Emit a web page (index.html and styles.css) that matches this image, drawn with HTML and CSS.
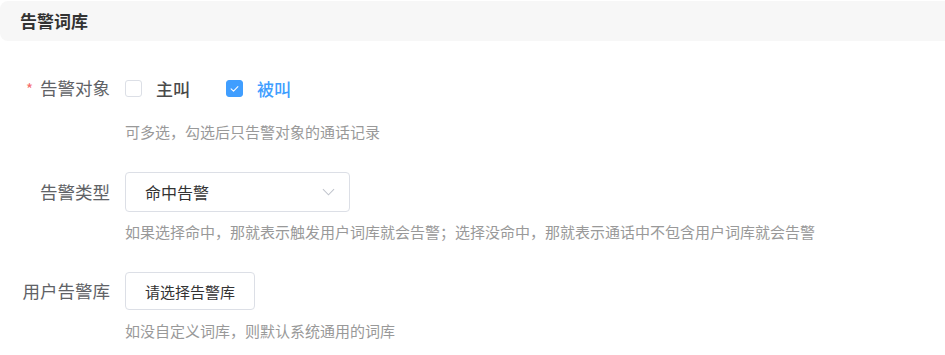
FILE: index.html
```html
<!DOCTYPE html>
<html lang="zh-CN">
<head>
  <meta charset="UTF-8">
  <meta name="viewport" content="width=device-width, initial-scale=1.0">
  <title>告警词库</title>
  <link rel="stylesheet" href="styles.css">
</head>
<body>

<div class="section-title">告警词库</div>

<form class="form">
  <div class="form-item item-first">
    <label class="form-label"><span class="required">*</span>告警对象</label>
    <div class="form-content">
      <div class="control">
        <label class="checkbox">
          <span class="box"></span>
          <span class="checkbox-text">主叫</span>
        </label>
        <label class="checkbox is-checked">
          <span class="box">
            <svg viewBox="0 0 16 16" width="13" height="13"><path d="M3.8 8.4 L6.8 11.2 L12.2 5.6" fill="none" stroke="#fff" stroke-width="1.3" stroke-linecap="round" stroke-linejoin="round"/></svg>
          </span>
          <span class="checkbox-text">被叫</span>
        </label>
      </div>
      <div class="help help-first">可多选，勾选后只告警对象的通话记录</div>
    </div>
  </div>

  <div class="form-item">
    <label class="form-label">告警类型</label>
    <div class="form-content">
      <div class="control">
        <div class="select">
          <span>命中告警</span>
          <svg class="arrow" viewBox="0 0 14 8" width="13" height="8"><path d="M1 1 L7 7 L13 1" fill="none" stroke="#c0c4cc" stroke-width="1.1"/></svg>
        </div>
      </div>
      <div class="help">如果选择命中，那就表示触发用户词库就会告警；选择没命中，那就表示通话中不包含用户词库就会告警</div>
    </div>
  </div>

  <div class="form-item">
    <label class="form-label">用户告警库</label>
    <div class="form-content">
      <div class="control">
        <button type="button" class="btn">请选择告警库</button>
      </div>
      <div class="help">如没自定义词库，则默认系统通用的词库</div>
    </div>
  </div>
</form>

</body>
</html>
```

FILE: styles.css
```css
* {
  box-sizing: border-box;
  margin: 0;
  padding: 0;
  font-family: "Noto Sans CJK SC", "Noto Sans", sans-serif;
}

body {
  background: #fff;
  color: #333;
  padding-top: 1px;
}

.section-title {
  height: 40px;
  line-height: 40px;
  padding-left: 20px;
  background: #f7f7f7;
  border-radius: 8px 0 0 8px;
  font-size: 17px;
  font-weight: bold;
  color: #333;
}

.form {
  padding-top: 27px;
}

.form-item {
  display: flex;
  margin-bottom: 29px;
}

.form-item.item-first {
  margin-bottom: 30px;
}

.form-label {
  width: 125px;
  padding-right: 15px;
  height: 40px;
  line-height: 40px;
  text-align: right;
  font-size: 17.5px;
  color: #606266;
}

.required {
  color: #f56c6c;
  font-size: 15px;
  margin-right: 7px;
}

.form-content {
  flex: 1;
}

.control {
  height: 40px;
  display: flex;
  align-items: center;
}

.help {
  margin-top: 10px;
  line-height: 20px;
  font-size: 15px;
  color: #999;
}

.help.help-first {
  margin-top: 14px;
}

.checkbox {
  display: flex;
  align-items: center;
  margin-right: 36px;
  cursor: pointer;
}

.checkbox .box {
  width: 17px;
  height: 17px;
  border: 1px solid #dcdfe6;
  border-radius: 3px;
  background: #fff;
  display: flex;
  align-items: center;
  justify-content: center;
  margin-right: 14px;
}

.checkbox-text {
  font-size: 17px;
  font-weight: 500;
  color: #4a4a4a;
}

.checkbox.is-checked .box {
  background: #409eff;
  border-color: #409eff;
}

.checkbox.is-checked .checkbox-text {
  color: #409eff;
}

.select {
  width: 225px;
  height: 40px;
  border: 1px solid #dcdfe6;
  border-radius: 4px;
  display: flex;
  align-items: center;
  justify-content: space-between;
  padding: 0 14px 0 19px;
  font-size: 16px;
  color: #333;
}

.arrow {
  display: block;
}

.btn {
  height: 38px;
  padding: 0 19px;
  border: 1px solid #dcdfe6;
  border-radius: 4px;
  background: #fff;
  font-size: 15px;
  color: #333;
  cursor: pointer;
}
```
